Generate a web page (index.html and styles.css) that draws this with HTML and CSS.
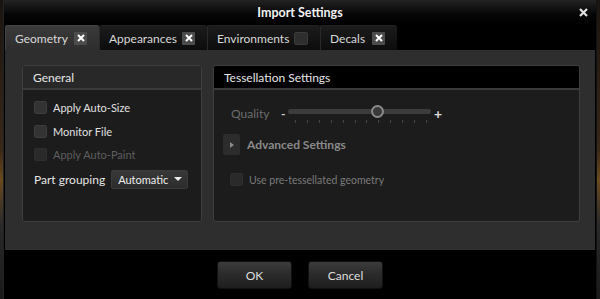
FILE: index.html
```html
<!DOCTYPE html>
<html lang="en">
<head>
  <meta charset="UTF-8">
  <title>Import Settings</title>
  <link rel="stylesheet" href="styles.css">
</head>
<body>

<div class="window">
  <div class="titlebar">
    <span class="title">Import Settings</span>
    <svg class="close" width="9" height="9" viewBox="0 0 9 9"><path d="M1 1L8 8M8 1L1 8" stroke="#e0e0e0" stroke-width="2.2"/></svg>
  </div>

  <div class="tabs">
    <div class="tab active t-geo">Geometry <span class="tab-x"><svg width="8" height="8" viewBox="0 0 8 8"><path d="M1 1L7 7M7 1L1 7" stroke="#fff" stroke-width="2"/></svg></span></div>
    <div class="tab t-app">Appearances <span class="tab-x"><svg width="8" height="8" viewBox="0 0 8 8"><path d="M1 1L7 7M7 1L1 7" stroke="#fff" stroke-width="2"/></svg></span></div>
    <div class="tab t-env">Environments <span class="tab-box"></span></div>
    <div class="tab t-dec">Decals <span class="tab-x"><svg width="8" height="8" viewBox="0 0 8 8"><path d="M1 1L7 7M7 1L1 7" stroke="#fff" stroke-width="2"/></svg></span></div>
  </div>

  <div class="content">
    <div class="panel general">
      <div class="panel-head">General</div>
      <div class="panel-body">
        <label class="check"><span class="box"></span>Apply Auto-Size</label>
        <label class="check"><span class="box"></span>Monitor File</label>
        <label class="check disabled"><span class="box"></span>Apply Auto-Paint</label>
        <div class="grouping">
          <span>Part grouping</span>
          <div class="select">Automatic <span class="caret"></span></div>
        </div>
      </div>
    </div>

    <div class="panel tess">
      <div class="panel-head">Tessellation Settings</div>
      <div class="panel-body">
        <div class="quality">
          <span class="q-label">Quality</span>
          <span class="minus">-</span>
          <div class="slider">
            <div class="track"></div>
            <div class="knob"></div>
            <div class="ticks">
              <i></i><i></i><i></i><i></i><i></i><i></i><i></i><i></i><i></i><i></i><i></i><i></i>
            </div>
          </div>
          <span class="plus">+</span>
        </div>
        <div class="advanced">
          <span class="expander"><span class="arrow"></span></span>
          <span class="adv-label">Advanced Settings</span>
        </div>
        <label class="check disabled pre"><span class="box"></span>Use pre-tessellated geometry</label>
      </div>
    </div>
  </div>

  <div class="footer">
    <button>OK</button>
    <button>Cancel</button>
  </div>
</div>

</body>
</html>
```

FILE: styles.css
```css
* {
  margin: 0;
  padding: 0;
  box-sizing: border-box;
  font-family: 'Lato', 'Open Sans', sans-serif;
}
body {
  width: 600px;
  height: 299px;
  overflow: hidden;
  background: linear-gradient(180deg, #1a1410 0%, #3a2818 50%, #6a4a20 60%, #2a2a2a 75%, #1a1a1a 100%);
}
.window {
  margin-left: 3px;
  width: 594px;
  height: 299px;
  background: #000;
  display: flex;
  flex-direction: column;
  border-left: 1px solid #222;
  border-right: 1px solid #111;
}
.titlebar {
  height: 25px;
  background: linear-gradient(#222, #050505 60%, #000);
  display: flex;
  align-items: center;
  justify-content: center;
  position: relative;
}
.title {
  color: #f2f2f2;
  font-weight: 700;
  font-size: 12.5px;
}
.close {
  position: absolute;
  right: 8px;
  top: 8px;
}
.tabs {
  height: 25px;
  display: flex;
  padding-left: 1px;
}
.tab {
  display: flex;
  align-items: center;
  justify-content: space-between;
  padding: 0 12px 0 9px;
  color: #d8d8d8;
  font-size: 12px;
  background: linear-gradient(#1c1c1c, #0c0c0c);
  border-left: 1px solid #2a2a2a;
  border-top: 1px solid #222;
  border-radius: 2px 2px 0 0;
  white-space: nowrap;
}
.tab.active {
  background: linear-gradient(#3a3a3a, #2e2e2e);
  border-color: #444;
}
.t-geo { width: 94px; }
.t-app { width: 108px; }
.t-env { width: 113px; }
.t-dec { width: 77px; }
.tab-x {
  width: 13px;
  height: 13px;
  background: #4c4c4c;
  display: flex;
  align-items: center;
  justify-content: center;
  border-radius: 1px;
}
.tab-box {
  width: 14px;
  height: 13px;
  background: #2e2e2e;
  border: 1px solid #3a3a3a;
  border-radius: 2px;
}
.content {
  height: 200px;
  margin: 0 1px;
  background: #2e2e2e;
  display: flex;
  gap: 11px;
  padding: 15px 15px 28px 17px;
}
.panel {
  height: 157px;
  border: 1px solid #3e3e3e;
  border-radius: 3px;
  background: #1c1c1c;
  display: flex;
  flex-direction: column;
  overflow: hidden;
}
.general { width: 180px; }
.tess { width: 367px; }
.panel-head {
  height: 24px;
  display: flex;
  align-items: center;
  padding-left: 10px;
  font-size: 12px;
  color: #e6e6e6;
  background: #282828;
  border-bottom: 2px solid #3a3a3a;
}
.tess .panel-head {
  background: #000;
}
.panel-body {
  flex: 1;
  padding: 6px 11px;
  display: flex;
  flex-direction: column;
}
.check {
  display: flex;
  align-items: center;
  gap: 6px;
  height: 23.5px;
  font-size: 11px;
  color: #e0e0e0;
}
.box {
  width: 13px;
  height: 13px;
  background: #333;
  border: 1px solid #3c3c3c;
  border-radius: 2px;
}
.check.disabled { color: #5e5e5e; }
.check.disabled .box { background: #2a2a2a; border-color: #2e2e2e; }
.grouping {
  display: flex;
  align-items: center;
  gap: 6px;
  margin-top: 3px;
  font-size: 12px;
  color: #e6e6e6;
  white-space: nowrap;
}
.select {
  width: 77px;
  height: 19px;
  background: linear-gradient(#383838, #2c2c2c);
  border: 1px solid #3a3a3a;
  border-radius: 2px;
  display: flex;
  align-items: center;
  justify-content: space-between;
  padding: 0 5px 0 6px;
  font-size: 11px;
  color: #eee;
}
.caret {
  width: 0;
  height: 0;
  border-left: 4px solid transparent;
  border-right: 4px solid transparent;
  border-top: 4px solid #eee;
}
.tess .panel-body {
  padding: 10px 9px;
}
.quality {
  display: flex;
  align-items: center;
  height: 26px;
  padding-left: 8px;
  font-size: 12px;
  color: #6c6c6c;
}
.q-label { width: 50px; }
.minus {
  color: #ccc;
  font-weight: 700;
  width: 6px;
}
.slider {
  position: relative;
  width: 143px;
  height: 26px;
  margin: 0 3px 0 1px;
}
.track {
  position: absolute;
  left: 0;
  right: 0;
  top: 9px;
  height: 5px;
  background: #3c3c3c;
  border-radius: 3px;
}
.knob {
  position: absolute;
  left: 83px;
  top: 5px;
  width: 13px;
  height: 13px;
  border-radius: 50%;
  background: #3a3a3a;
  border: 2px solid #8a8a8a;
}
.ticks {
  position: absolute;
  left: 7px;
  right: 4px;
  top: 20px;
  display: flex;
  justify-content: space-between;
}
.ticks i {
  width: 1px;
  height: 3px;
  background: #444;
}
.plus {
  color: #ddd;
  font-size: 14px;
  font-weight: 700;
}
.advanced {
  display: flex;
  align-items: center;
  gap: 7px;
  margin-top: 8px;
  height: 21px;
}
.expander {
  width: 17px;
  height: 21px;
  background: #2c2c2c;
  border-radius: 2px;
  display: flex;
  align-items: center;
  justify-content: center;
}
.arrow {
  width: 0;
  height: 0;
  border-top: 3px solid transparent;
  border-bottom: 3px solid transparent;
  border-left: 4px solid #888;
}
.adv-label {
  font-size: 12px;
  font-weight: 700;
  color: #8a8a8a;
}
.check.pre {
  margin-top: 13px;
  padding-left: 7px;
  font-size: 10.5px;
  color: #7a7a7a;
}
.footer {
  flex: 1;
  display: flex;
  justify-content: center;
  align-items: flex-start;
  gap: 16px;
  padding-top: 11px;
}
button {
  width: 75px;
  height: 28px;
  background: linear-gradient(#3c3c3c, #2a2a2a 50%, #1e1e1e);
  border: 1px solid #111;
  border-radius: 3px;
  color: #ddd;
  font-size: 12px;
}
```
